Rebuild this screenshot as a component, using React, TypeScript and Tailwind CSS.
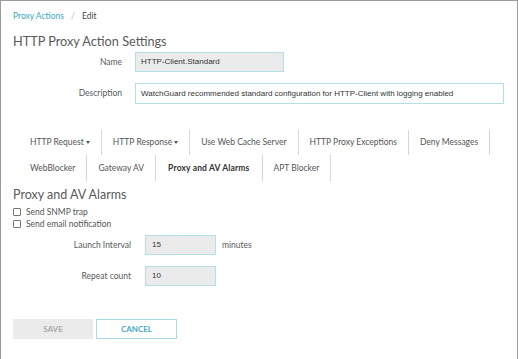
import React from "react";

const lato = { fontFamily: "Lato, 'Open Sans', sans-serif" } as const;
const arial = { fontFamily: "'Liberation Sans', Arial, sans-serif" } as const;

function Caret() {
  return (
    <span className="ml-[2px] inline-block h-0 w-0 border-x-[2.5px] border-t-[3px] border-x-transparent border-t-[#555] align-middle" />
  );
}

function Tab({ label, caret, active }: { label: string; caret?: boolean; active?: boolean }) {
  return (
    <div
      className={`flex h-full items-center border-r border-[#d6d6d6] px-[11px] text-[8.5px] ${
        active ? "px-[12px] font-bold tracking-[0.15px] text-[#333]" : "text-[#555]"
      }`}
    >
      {label}
      {caret && <Caret />}
    </div>
  );
}

export default function App() {
  return (
    <div
      className="h-[359px] w-[518px] overflow-hidden border-x border-t border-[#9b9b9b] bg-white pl-[12px] pt-[9px]"
      style={lato}
    >
      <div className="flex h-[12px] items-center text-[8.5px]">
        <span className="text-[#3ea7c3]">Proxy Actions</span>
        <span className="mx-[7px] text-[#bbb]">/</span>
        <span className="text-[#444]">Edit</span>
      </div>

      <div className="mt-[10px] h-[18px] text-[12.7px] leading-[18px] text-[#5a5a5a]">HTTP Proxy Action Settings</div>

      <div className="mt-[2px] flex items-center">
        <div className="w-[109px] text-right text-[8.5px] text-[#5a5a5a]">Name</div>
        <div
          className="ml-[13px] flex h-[20px] w-[149px] items-center border border-[#b4dfe8] bg-[#ebebeb] pl-[5px] text-[8px] text-[#333]"
          style={arial}
        >
          HTTP-Client.Standard
        </div>
      </div>

      <div className="mt-[11px] flex items-center">
        <div className="w-[109px] text-right text-[8.5px] text-[#5a5a5a]">Description</div>
        <div
          className="ml-[13px] flex h-[21px] w-[369px] items-center border border-[#b4dfe8] bg-white pl-[5px] text-[8px] text-[#333]"
          style={arial}
        >
          WatchGuard recommended standard configuration for HTTP-Client with logging enabled
        </div>
      </div>

      <div className="ml-[6px] mt-[26px] flex h-[25px]">
        <Tab label="HTTP Request" caret />
        <Tab label="HTTP Response" caret />
        <Tab label="Use Web Cache Server" />
        <Tab label="HTTP Proxy Exceptions" />
        <Tab label="Deny Messages" />
      </div>
      <div className="ml-[6px] flex h-[26px]">
        <Tab label="WebBlocker" />
        <Tab label="Gateway AV" />
        <Tab label="Proxy and AV Alarms" active />
        <Tab label="APT Blocker" />
      </div>

      <div className="mt-[6px] h-[16px] text-[12.5px] leading-[16px] text-[#5a5a5a]">Proxy and AV Alarms</div>

      <div className="mt-[3px] flex flex-col">
        {["Send SNMP trap", "Send email notification"].map((t) => (
          <label key={t} className="flex h-[12px] items-center text-[8.5px] text-[#555]">
            <span className="mr-[5px] inline-block h-[8px] w-[8px] rounded-[1px] border border-[#777] bg-white" />
            {t}
          </label>
        ))}
      </div>

      <div className="mt-[5px] flex items-center">
        <div className="w-[118px] text-right text-[8.5px] text-[#5a5a5a]">Launch Interval</div>
        <div
          className="ml-[14px] flex h-[20px] w-[71px] items-center border border-[#b4dfe8] bg-[#ebebeb] pl-[6px] text-[8px] text-[#333]"
          style={arial}
        >
          15
        </div>
        <div className="ml-[6px] text-[8.5px] text-[#5a5a5a]">minutes</div>
      </div>

      <div className="mt-[11px] flex items-center">
        <div className="w-[118px] text-right text-[8.5px] text-[#5a5a5a]">Repeat count</div>
        <div
          className="ml-[14px] flex h-[20px] w-[71px] items-center border border-[#b4dfe8] bg-[#ebebeb] pl-[6px] text-[8px] text-[#333]"
          style={arial}
        >
          10
        </div>
      </div>

      <div className="mt-[33px] flex gap-[3px]">
        <div className="flex h-[20px] w-[80px] items-center justify-center bg-[#ebebeb] text-[8px] font-bold text-[#aaa]">
          SAVE
        </div>
        <div className="flex h-[20px] w-[81px] items-center justify-center border border-[#a9dbe6] bg-white text-[8px] font-bold text-[#47abc6]">
          CANCEL
        </div>
      </div>
    </div>
  );
}
